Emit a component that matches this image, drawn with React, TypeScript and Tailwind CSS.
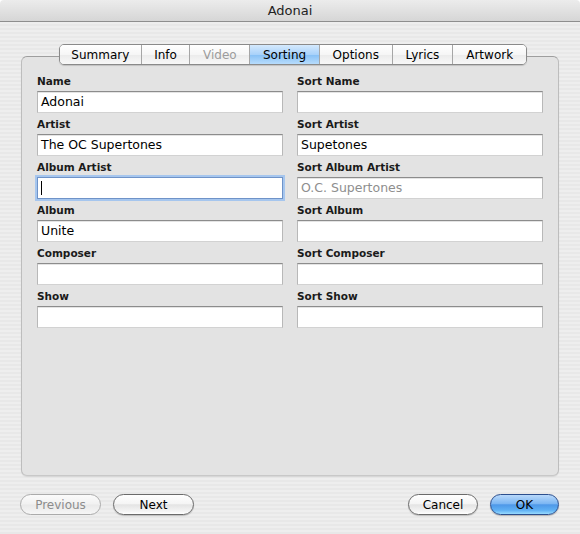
import React from "react";

type Field = {
  label: string;
  value?: string;
  placeholder?: string;
  focused?: boolean;
};

const rows: [Field, Field][] = [
  [{ label: "Name", value: "Adonai" }, { label: "Sort Name" }],
  [{ label: "Artist", value: "The OC Supertones" }, { label: "Sort Artist", value: "Supetones" }],
  [{ label: "Album Artist", focused: true }, { label: "Sort Album Artist", placeholder: "O.C. Supertones" }],
  [{ label: "Album", value: "Unite" }, { label: "Sort Album" }],
  [{ label: "Composer" }, { label: "Sort Composer" }],
  [{ label: "Show" }, { label: "Sort Show" }],
];

const tabs = [
  { name: "Summary", w: "w-[81px]" },
  { name: "Info", w: "w-[49px]" },
  { name: "Video", w: "w-[60px]", disabled: true },
  { name: "Sorting", w: "w-[70px]", active: true },
  { name: "Options", w: "w-[73px]" },
  { name: "Lyrics", w: "w-[61px]" },
  { name: "Artwork", w: "w-[74px]" },
];

function TextField({ f }: { f: Field }) {
  return (
    <div className="flex flex-col">
      <div className="h-[14px] text-[10.5px] font-bold leading-[14px] text-[#1a1a1a]">{f.label}</div>
      <div
        className={
          "mt-[3px] flex h-[22px] items-center bg-white pl-[3px] text-[12.5px] text-black " +
          (f.focused
            ? "border border-[#6f93c8] shadow-[0_0_0_2px_#a6c6ee]"
            : "border border-t-[#8c8c8c] border-x-[#b8b8b8] border-b-[#d2d2d2] shadow-[inset_0_1px_0_#e4e4e4]")
        }
      >
        {f.focused && <span className="h-[14px] w-[1px] bg-black" />}
        {f.value && <span className="whitespace-nowrap">{f.value}</span>}
        {f.placeholder && <span className="whitespace-nowrap text-[#8e8e8e]">{f.placeholder}</span>}
      </div>
    </div>
  );
}

function PillButton({
  label,
  w,
  kind,
}: {
  label: string;
  w: string;
  kind: "normal" | "disabled" | "default";
}) {
  const base = "flex h-[21px] items-center justify-center rounded-full text-[12px] " + w + " ";
  if (kind === "default") {
    return (
      <div
        className={
          base +
          "border border-[#2c4f8e] text-black bg-[linear-gradient(to_bottom,#b9d9fb_0%,#7db7f3_45%,#4e98e8_52%,#5fb0f4_80%,#98dbff_100%)] shadow-[0_1px_1px_rgba(0,0,0,0.25)]"
        }
      >
        {label}
      </div>
    );
  }
  if (kind === "disabled") {
    return (
      <div
        className={
          base +
          "border border-[#ababab] text-[#8c8c8c] bg-[linear-gradient(to_bottom,#fbfbfb_0%,#f1f1f1_48%,#e9e9e9_52%,#f6f6f6_100%)]"
        }
      >
        {label}
      </div>
    );
  }
  return (
    <div
      className={
        base +
        "border border-[#6b6b6b] text-black bg-[linear-gradient(to_bottom,#ffffff_0%,#f5f5f5_45%,#e4e4e4_52%,#f4f4f4_85%,#ffffff_100%)] shadow-[0_1px_1px_rgba(0,0,0,0.2)]"
      }
    >
      {label}
    </div>
  );
}

export default function App() {
  return (
    <div className="flex h-[534px] w-[580px] flex-col overflow-hidden font-['DejaVu_Sans',sans-serif] text-black">
      {/* window title bar */}
      <div className="flex h-[22px] shrink-0 items-center justify-center rounded-t-[4px] border-b border-[#8e8e8e] bg-[linear-gradient(to_bottom,#ececec,#d6d6d6)] text-[13px] text-[#222]">
        Adonai
      </div>

      {/* window body */}
      <div className="flex flex-1 flex-col bg-[repeating-linear-gradient(to_bottom,#eeeeee_0px,#eeeeee_2px,#e8e8e8_2px,#e8e8e8_4px)] px-[21px] pt-[22px]">
        {/* tab strip */}
        <div className="relative z-10 ml-[38px] flex h-[21px] w-[468px] overflow-hidden rounded-[5px] border border-[#8a8a8a] shadow-[0_1px_1px_rgba(0,0,0,0.15)]">
          {tabs.map((t, i) => (
            <div
              key={t.name}
              className={
                "flex h-full items-center justify-center text-[12px] " +
                t.w +
                (i > 0 ? " border-l border-[#a6a6a6]" : "") +
                (t.active
                  ? " bg-[linear-gradient(to_bottom,#d4e9fd_0%,#a9d2fa_50%,#8ac2f6_55%,#b7dcfc_100%)] text-black"
                  : " bg-[linear-gradient(to_bottom,#ffffff_0%,#f6f6f6_50%,#ececec_55%,#f8f8f8_100%)]") +
                (t.disabled ? " text-[#9c9c9c]" : " text-black")
              }
            >
              {t.name}
            </div>
          ))}
        </div>

        {/* tab panel */}
        <div className="mt-[-9px] flex h-[420px] flex-col rounded-[6px] border border-t-[#9e9e9e] border-x-[#bdbdbd] border-b-[#c8c8c8] bg-[#e3e3e3] px-[15px] pt-[17px] shadow-[0_1px_1px_rgba(0,0,0,0.08)]">
          <div className="grid grid-cols-2 gap-x-[14px] gap-y-[4px]">
            {rows.map(([a, b]) => (
              <React.Fragment key={a.label}>
                <TextField f={a} />
                <TextField f={b} />
              </React.Fragment>
            ))}
          </div>
        </div>

        {/* dialog buttons */}
        <div className="mt-[18px] flex items-center">
          <div className="ml-[-1px] flex gap-[12px]">
            <PillButton label="Previous" w="w-[81px]" kind="disabled" />
            <PillButton label="Next" w="w-[81px]" kind="normal" />
          </div>
          <div className="ml-auto flex gap-[12px]">
            <PillButton label="Cancel" w="w-[70px]" kind="normal" />
            <PillButton label="OK" w="w-[69px]" kind="default" />
          </div>
        </div>
      </div>
    </div>
  );
}
